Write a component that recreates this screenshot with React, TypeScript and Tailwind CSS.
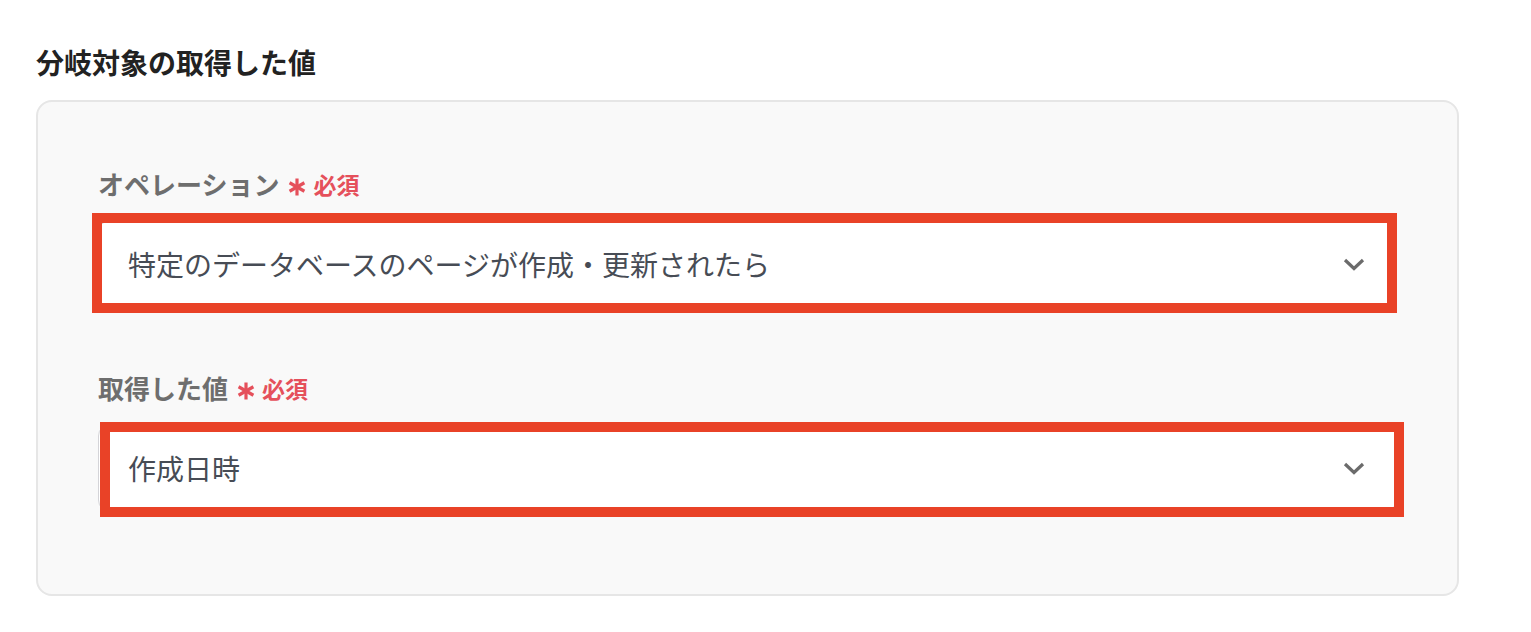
import React from "react";

const font = { fontFamily: '"Noto Sans CJK JP", "Noto Sans", sans-serif' };

function Required() {
  return (
    <span className="ml-[9px] inline-flex items-center gap-[7px] text-[#e5505b]">
      <svg width="18" height="18" viewBox="0 0 18 18" className="mt-[6px]">
        <g stroke="#e5505b" strokeWidth="3.2" strokeLinecap="butt">
          <line x1="9" y1="0.5" x2="9" y2="17.5" />
          <line x1="1.6" y1="4.75" x2="16.4" y2="13.25" />
          <line x1="1.6" y1="13.25" x2="16.4" y2="4.75" />
        </g>
      </svg>
      <span className="text-[23px] font-bold leading-[36px]">必須</span>
    </span>
  );
}

function Chevron() {
  return (
    <svg width="22" height="13" viewBox="0 0 22 13" fill="none">
      <path d="M2 2 L11 10.5 L20 2" stroke="#6b6b6b" strokeWidth="3.2" />
    </svg>
  );
}

function Field({
  label,
  value,
  box,
}: {
  label: string;
  value: string;
  box: string;
}) {
  return (
    <div>
      <div className="flex items-center">
        <span className="text-[26px] font-bold leading-[36px] text-[#6e6e6e]">{label}</span>
        <Required />
      </div>
      <div className="relative mt-[18px]">
        <div className="flex h-[88px] items-center justify-between rounded-[12px] border border-[#d4d4d8] bg-white pl-[29px] pr-[31px]">
          <span className="text-[28px] leading-none text-[#474c55]">{value}</span>
          <Chevron />
        </div>
        <div className={"pointer-events-none absolute border-[10px] border-[#e94227] " + box} />
      </div>
    </div>
  );
}

export default function App() {
  return (
    <div className="min-h-[632px] bg-white px-[36px] pt-[42px]" style={font}>
      <h2 className="text-[28px] font-bold leading-[40px] text-[#222222]">分岐対象の取得した値</h2>
      <div className="mt-[18px] w-[1423px] rounded-[16px] border-2 border-[#e6e6e6] bg-[#f9f9f9] pb-[82px] pl-[60px] pr-[60px] pt-[64px]">
        <Field
          label="オペレーション"
          value="特定のデータベースのページが作成・更新されたら"
          box="-top-[7px] -bottom-[5px] -left-[6px] right-0"
        />
        <div className="mt-[62px]">
          <Field label="取得した値" value="作成日時" box="-top-[2px] -bottom-[5px] left-[2px] -right-[7px]" />
        </div>
      </div>
    </div>
  );
}
